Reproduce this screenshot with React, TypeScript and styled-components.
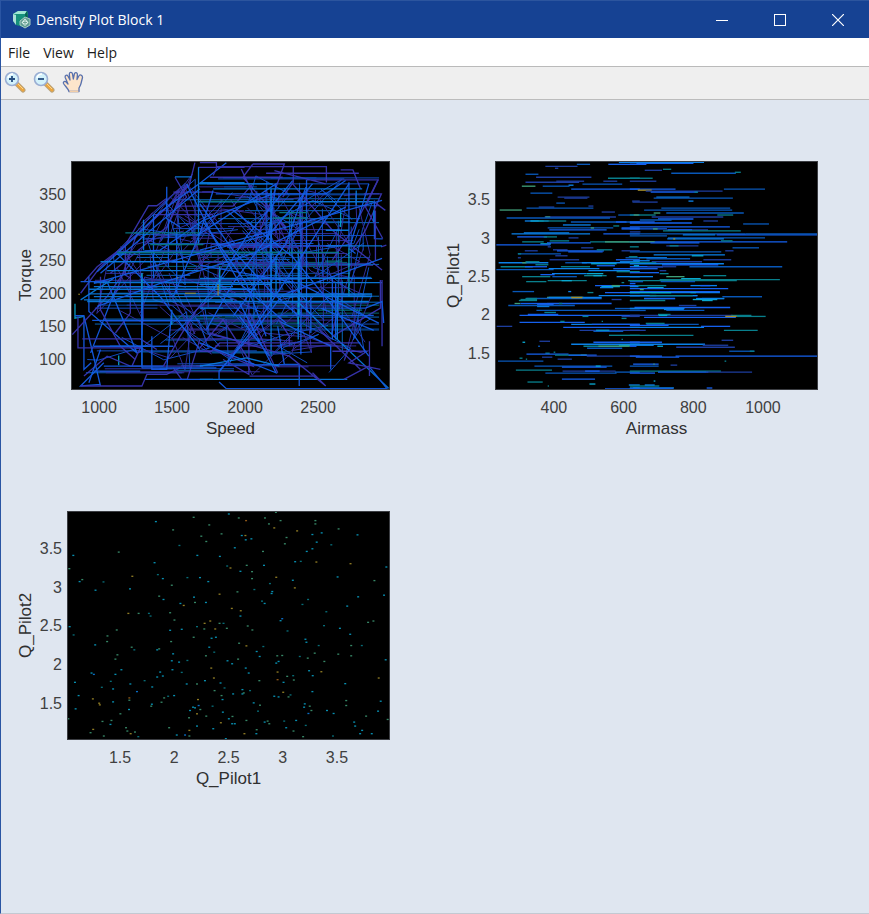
import React from 'react';
import styled, { createGlobalStyle } from 'styled-components';

const GlobalStyle = createGlobalStyle`
  * { box-sizing: border-box; }
  body { margin: 0; background: #dfe6f0; }
`;

const Window = styled.div`
  display: flex;
  flex-direction: column;
  min-height: 100vh;
  border-left: 1px solid #2a55a3;
  border-bottom: 1px solid #c3c9d2;
  background: #dfe6f0;
  font-family: 'Open Sans', 'Noto Sans', sans-serif;
`;

const TitleBar = styled.header`
  display: flex;
  align-items: center;
  height: 38px;
  padding-left: 10px;
  gap: 4px;
  background: #164293;
  border-top: 1px solid #2c559e;
  color: #fff;
`;

const Title = styled.h1`
  flex: 1;
  margin: 0;
  font-size: 14px;
  font-weight: 400;
  line-height: 20px;
`;

const CaptionButton = styled.button`
  display: grid;
  place-items: center;
  width: 58px;
  height: 100%;
  padding: 0;
  border: 0;
  background: none;
  color: #fff;
`;

const CaptionButtons = styled.div`
  display: flex;
  height: 100%;
  padding-right: 2px;
`;

const MenuBar = styled.nav`
  display: flex;
  align-items: center;
  height: 28px;
  gap: 13px;
  padding: 2px 7px 0;
  background: #fff;
`;

const MenuItem = styled.button`
  padding: 0;
  border: 0;
  background: none;
  color: #1c1c1c;
  font: 14px/20px 'Open Sans', 'Noto Sans', sans-serif;
`;

const ToolBar = styled.div`
  display: flex;
  align-items: center;
  height: 34px;
  gap: 5px;
  padding: 0 2px 2px;
  background: #efefef;
  border-top: 1px solid #bababa;
  border-bottom: 1px solid #bcbcbc;
`;

const ToolButton = styled.button`
  display: grid;
  place-items: center;
  width: 24px;
  height: 24px;
  padding: 0;
  border: 0;
  background: none;
`;

const Figure = styled.main`
  flex: 1;
  display: grid;
  grid-template-columns: 1fr 1fr;
  align-content: start;
  row-gap: 10px;
  padding-right: 12px;
  font-family: 'Liberation Sans', Arial, sans-serif;
`;

const Chart = styled.section<{ $gutter: number }>`
  display: grid;
  grid-template-columns: 18px ${p => p.$gutter}px 1fr;
  grid-template-rows: 229px 28px 22px;
  padding: 61px 39px 0 16px;
`;

const YLabel = styled.div`
  writing-mode: vertical-rl;
  transform: rotate(180deg);
  text-align: center;
  font-size: 17px;
  line-height: 18px;
  color: #303030;
`;

const YTicks = styled.div<{ $rows: string }>`
  display: grid;
  grid-template-rows: ${p => p.$rows};
  padding-right: 5px;
  text-align: right;
  font-size: 16px;
  line-height: 20px;
  color: #404040;
`;

const YTick = styled.span<{ $row: number }>`
  grid-row: ${p => p.$row};
  align-self: center;
`;

const XTicks = styled.div<{ $lead: number; $trail: number }>`
  grid-column: 3;
  display: flex;
  margin: 8px ${p => p.$trail}% 0 ${p => p.$lead}%;
  font-size: 16px;
  line-height: 20px;
  color: #404040;
`;

const XTick = styled.span`
  flex: 1 1 0;
  min-width: 0;
  text-align: center;
`;

const XLabel = styled.div`
  grid-column: 3;
  text-align: center;
  font-size: 17px;
  line-height: 22px;
  color: #303030;
`;

const Plot = styled.svg`
  display: block;
  width: 100%;
  height: 100%;
  background: #000;
  border: 1px solid #3b3d42;
`;

type Axis = { label: string; min: number; max: number; ticks: number[] };

/* Share of the axis that lies before the first and after the last tick cell. */
function margins({ min, max, ticks }: Axis) {
  const half = (ticks[1] - ticks[0]) / 2;
  const span = max - min;
  return {
    before: (ticks[0] - half - min) / span,
    cell: (half * 2) / span,
    after: (max - ticks[ticks.length - 1] - half) / span,
  };
}

function DensityChart({ x, y, gutter, children }: {
  x: Axis; y: Axis; gutter: number; children: React.ReactNode;
}) {
  const mx = margins(x);
  const my = margins(y);
  const rows = `${my.after * 100}fr repeat(${y.ticks.length}, ${my.cell * 100}fr) ${my.before * 100}fr`;
  return (
    <Chart $gutter={gutter} aria-label={`${y.label} over ${x.label}`}>
      <YLabel>{y.label}</YLabel>
      <YTicks $rows={rows}>
        {[...y.ticks].reverse().map((t, i) => <YTick key={t} $row={i + 2}>{t}</YTick>)}
      </YTicks>
      {children}
      <XTicks $lead={mx.before * 100} $trail={mx.after * 100}>
        {x.ticks.map(t => <XTick key={t}>{t}</XTick>)}
      </XTicks>
      <XLabel>{x.label}</XLabel>
    </Chart>
  );
}

const COLORS: Record<string, string> = {
  i: '#3c38bb', n: '#1d3d9e', b: '#1560ee', a: '#0a80e8', d: '#0857b8',
  c: '#08a8d0', t: '#087f8c', g: '#409e78', y: '#a8902a', o: '#a5651c',
};

function random(seed: number) {
  let s = seed;
  return () => {
    s = (s * 1664525 + 1013904223) % 4294967296;
    return s / 4294967296;
  };
}

/* ---- Torque over Speed: traces of the driven operating points ---- */

const TRACES: [string, string][] = [
  ['i', 'M250 396L290 350L375 285L445 166H470L498 145M375 285V375L390 384M410 250L350 420L334 450M525 80L560 140L530 168'],
  ['i', 'M585 36L568 105L480 190L410 252L300 350L240 430M595 50H735M520 125H640M530 167H700L760 100M460 193H640M330 370L500 230L560 100'],
  ['b', 'M290 365L400 265L480 185L600 98L680 36M300 370L440 250L600 115M350 310L480 300L610 210L820 130'],
  ['i', 'M600 36H650V48H982V96M760 40L730 80L800 160L860 240M640 75L652 50M630 80H850M725 55L760 130L860 230M882 48V95L850 140'],
  ['i', 'M760 40H855L830 110L760 300M800 68H1080M825 60L980 100M922 88H1138L1060 240L1000 330M1025 58H1062L1085 115'],
  ['a', 'M525 79H575M600 96H735M600 100H820M596 50V280M593 154H1125M430 208V300M352 307H850M300 335H560'],
  ['b', 'M500 109V205L540 230M505 210V350M460 193V385M530 240V430M648 130H980L1040 90M815 120V470M805 270L830 100L600 250'],
  ['b', 'M922 88V485M905 140V420M880 90L740 260L640 420M1050 95V295L1070 310M1052 292L1110 100M1127 150V265L1152 266'],
  ['i', 'M1095 130H1148L1100 240L1060 300M1127 155L1160 180M1138 88L1100 170L1152 265M880 100L1000 240L1150 360M1130 180V330M1147 290L1163 285'],
  ['a', 'M815 115V620M900 325V500M897 300V570M425 370V650M1072 120V165M1125 180V215M830 320V440'],
  ['t', 'M840 187H925M820 203H925M980 333H1030M375 248H600M450 283H610M350 307H1020M600 153H720M955 481H1090'],
  ['c', 'M425 370V480M897 460V523M223 462V505L250 500M355 618V647M660 350V430M515 483V525M1025 175V230M1050 440V295'],
  ['b', 'M265 380V485L410 610M270 610L345 420M240 395H320L410 610L425 605M250 500V660L272 640M223 498H250L300 710M300 705L240 710L310 640'],
  ['i', 'M215 555L320 440L390 340M232 500V595H420L395 650M245 568H420L470 600M250 680L320 620L390 650H610M240 710H425L440 675H500L540 655'],
  ['i', 'M520 655L545 690H562L600 570M300 380V480L360 590L405 630M390 370V490L345 550M490 650L540 560L590 480L665 420'],
  ['b', 'M435 690H640M280 665H420M425 655H650M275 512H600M280 590H520M300 600L265 700M310 650H490M425 440V655M455 560V660H500L515 480'],
  ['a', 'M250 450H700M265 432H1120M280 410H700M265 418H770M280 398H1150M320 362H600M280 440H1120M260 455H1110M900 460L1170 717M600 690H1045'],
  ['b', 'M658 690V665L765 545L850 435L1150 325M658 698L680 718H1165L1110 650M835 530L855 645H900V710M840 515L995 590V660M600 648L860 645'],
  ['i', 'M600 595L670 510L760 650L640 600M748 460V675L670 630M870 590V560L838 510M1112 575V680M1145 390V475L1000 560M1150 390V590M1110 650L1035 690'],
  ['i', 'M1000 605H1105L1050 640L1145 660M960 540L1085 660M600 605H635L660 580H1085M750 490L835 670M630 550L870 620L980 710M940 670L980 710L950 680H750'],
  ['b', 'M600 475H1100L1150 455L1155 520M600 497H1125M965 475L1125 542M720 500L810 620M720 460L830 670L600 580M1000 385V570M1010 400V570M935 440V550M905 480V615'],
  ['a', 'M600 475H670M670 435H1120M600 385H1120M600 403H815M980 287H1150M980 240H1050M640 115H1090M1015 440V570M340 385L240 450M600 650L740 625L840 650'],
  ['b', 'M600 160L700 300L810 420L900 500M610 215L740 400L800 560M920 110L860 280L700 500M1050 100L900 330L760 540L660 665M600 300L900 220L1150 150M280 400L560 320L820 250M600 345L900 400L1140 520'],
  ['b', 'M560 100L640 260L720 400L860 520M700 180L880 320L1010 480L1110 620M290 470L480 400L760 310L1040 170M620 540L700 400L820 240L940 100M350 310L480 440L600 600M520 440L600 250L640 120'],
];

const LEFT_EDGE: [number, number][] = [[40, 590], [100, 545], [165, 470], [247, 385], [350, 300], [430, 250], [720, 250]];

function leftEdge(y: number) {
  for (let i = 1; i < LEFT_EDGE.length; i++) {
    const [y1, x1] = LEFT_EDGE[i];
    const [y0, x0] = LEFT_EDGE[i - 1];
    if (y <= y1) return x0 + ((x1 - x0) * (y - y0)) / (y1 - y0);
  }
  return 250;
}

function operatingTraces() {
  const r = random(71);
  const out: [string, string][] = [];
  const snap = (v: number) => Math.round(v / 3) * 3 + 1;
  for (let i = 0; i < 108; i++) {
    const y = snap(80 + r() * 600);
    const left = leftEdge(y);
    const x0 = left + r() * (1000 - left) * 0.8;
    const x1 = Math.min(1140, x0 + 70 + r() * 480);
    out.push(['iiibbbaadt'[Math.floor(r() * 10)], `M${snap(x0)} ${y}H${snap(x1)}`]);
  }
  for (let i = 0; i < 36; i++) {
    const x = snap(600 + r() * 500);
    const y = snap(90 + r() * 340);
    out.push(['iiibba'[Math.floor(r() * 6)], `M${x} ${y}V${snap(y + 40 + r() * 180)}`]);
  }
  for (let i = 0; i < 125; i++) {
    let y = 120 + r() * 480;
    let x = Math.max(leftEdge(y) + r() * 100, 340 + r() * 760);
    let d = `M${Math.round(x)} ${Math.round(y)}`;
    for (let k = 0; k < 2; k++) {
      y = Math.max(70 + r() * 80, Math.min(560 + r() * 120, y + (r() - 0.5) * 440));
      x = Math.max(leftEdge(y) + 10, Math.min(1070 + r() * 70, x + (r() - 0.5) * 340));
      d += `L${Math.round(x)} ${Math.round(y)}`;
    }
    out.push(['iiiiibbb'[Math.floor(r() * 8)], d]);
  }
  return out;
}

const BACKGROUND_TRACES = operatingTraces();

function SpeedTorquePlot() {
  return (
    <Plot viewBox="214 34 957 685" preserveAspectRatio="none" fill="none" strokeWidth="3">
      <g opacity="0.82">
        {BACKGROUND_TRACES.map(([c, d], i) => <path key={i} d={d} stroke={COLORS[c]} />)}
      </g>
      <g opacity="0.9" strokeWidth="4">
        {TRACES.map(([c, d], i) => <path key={i} d={d} stroke={COLORS[c]} />)}
      </g>
      <path d="M555 430H588M530 384H534M233 433H238M655 403V437" stroke={COLORS.y} />
    </Plot>
  );
}

/* ---- Q_Pilot1 over Airmass: runs "colour start end row", one table per quadrant ---- */

const RUNS = [
  {
    at: 'translate(0 0)',
    data: `n 345 442 45;d 440 480 40;b 535 630 40;a 567 630 35;n 374 384 53;d 285 324 70;n 317 484 78;t 534 630 82;n 285 447 95;n 378 462 91;g 274 315 107;d 337 418 105;a 415 430 102;d 457 577 100;n 520 562 92;
b 423 630 116;d 300 366 127;n 382 478 138;n 402 472 142;n 607 630 152;d 378 404 157;n 325 372 168;d 288 490 172;n 475 490 167;g 207 274 178;n 515 555 183;d 565 630 193;g 612 628 192;n 343 558 198;g 345 360 199;d 228 540 203;
a 283 355 211;c 300 340 212;t 325 408 210;d 422 630 214;b 558 590 214;a 398 482 223;t 550 568 225;d 352 550 233;g 482 492 232;b 575 630 231;b 357 530 237;b 575 630 236;a 280 417 247;a 243 480 251;b 520 630 250;b 260 350 260;t 340 380 260;n 415 445 262;
t 275 340 275;t 358 417 270;t 480 630 274;g 525 600 274;c 330 362 279;b 350 482 278;b 197 360 284;n 352 362 288;n 453 490 292;n 368 412 298;b 380 522 301;b 414 518 304;t 500 547 297;n 575 630 300;n 283 322 301;d 262 392 310;t 262 272 310;n 375 412 316;t 597 623 318;
n 262 271 323;n 358 447 328;b 558 630 329;d 587 630 322;a 204 354 338;g 275 288 337;t 285 327 334;t 315 354 342;d 405 470 338;a 455 630 338;c 483 560 340;a 570 630 333;b 500 555 347;t 210 307 350;t 392 480 348;b 283 350 350;
d 197 370 358;a 355 508 356;b 550 630 355;a 475 600 361;t 560 630 364;a 365 470 369;c 470 520 370;b 330 373 372;t 462 530 376;c 490 516 375;t 275 360 380;d 366 440 379;a 560 630 379;t 287 348 393;t 352 470 391;c 394 425 391;t 575 583 396;t 595 630 391;
b 495 630 407;c 514 570 408;a 510 550 413;g 545 570 407;d 246 311 425;a 414 423 423;b 525 630 427;t 472 490 426;a 506 630 436;g 350 460 442;d 288 515 445;y 423 457 442;t 270 320 449;n 545 575 449`,
  },
  {
    at: 'translate(600 0)',
    data: `b 20 192 38;a 0 224 34;b 0 50 40;n 45 97 58;t 100 125 55;d 125 320 68;t 317 335 65;t 0 69 83;n 0 80 92;b 0 138 116;y 24 66 118;n 48 280 122;b 63 204 125;t 195 206 125;d 284 408 116;a 80 180 140;d 72 311 143;n 8 84 153;a 177 192 152;
d 95 303 173;d 43 309 178;d 110 344 188;g 72 92 188;n 66 282 198;t 264 312 193;y 12 26 192;t 0 78 193;b 85 192 206;d 30 126 208;n 222 266 210;b 0 75 214;b 0 187 218;d 342 420 220;b 0 302 230;b 0 112 235;g 70 84 236;n 110 236 238;b 115 188 238;t 100 335 241;n 0 32 244;
d 0 350 250;a 160 258 254;b 262 566 254;d 350 566 251;d 0 112 257;d 115 408 263;a 113 284 266;y 131 137 265;b 0 475 273;t 275 310 270;g 0 75 273;b 62 210 277;n 110 207 287;t 120 147 286;t 0 27 290;d 310 390 293;d 0 276 303;n 288 313 300;a 72 287 313;c 187 222 315;t 0 22 318;
a 28 112 323;d 50 182 325;a 10 60 330;n 222 306 328;n 66 218 333;t 0 80 338;a 0 284 340;b 97 267 343;b 0 100 349;c 12 28 345;n 53 140 348;d 180 460 350;b 0 84 355;n 90 110 362;b 0 88 368;t 90 117 371;t 222 291 376;a 0 70 380;g 110 165 380;c 155 214 384;
a 99 273 387;t 90 453 388;t 22 323 391;d 0 40 393;d 93 197 395;b 0 17 401;t 20 110 405;a 183 263 405;b 213 243 407;a 0 26 408;c 53 102 413;b 0 297 416;g 30 42 418;a 0 272 427;t 65 125 427;c 183 200 427;c 0 80 436;b 0 204 437;d 280 399 440;a 43 136 446;a 200 285 446;c 218 250 450`,
  },
  {
    at: 'translate(0 420)',
    data: `t 265 320 30;g 252 270 40;b 270 350 40;t 285 320 26;b 320 370 44;a 320 357 48;d 233 434 47;a 355 515 22;y 423 457 22;b 350 545 40;t 386 396 40;d 318 630 61;d 555 630 55;t 342 377 68;b 292 384 73;b 267 630 77;t 457 475 79;n 575 630 79;t 575 590 84;b 267 464 97;t 390 403 94;t 515 519 95;a 423 630 103;b 485 630 104;
n 198 245 110;b 399 630 112;n 448 630 122;c 498 538 120;d 490 580 124;t 537 630 135;t 575 579 148;n 327 359 153;c 276 284 156;d 323 329 168;b 490 630 157;a 423 630 163;c 567 602 167;t 460 575 169;g 505 600 169;d 471 577 175;t 345 358 190;t 370 375 187;
b 288 415 193;t 374 470 195;g 452 470 196;b 415 500 196;n 470 630 198;n 335 366 202;n 382 425 208;t 267 276 205;t 286 290 208;d 202 339 214;d 312 547 230;b 395 530 232;c 497 512 228;t 256 365 240;n 397 557 244;b 465 509 243;d 345 560 250;d 555 630 248;b 395 495 268;t 291 337 277;t 352 356 288;c 478 496 283;b 525 630 299;a 597 630 286;a 610 630 296`,
  },
  {
    at: 'translate(600 420)',
    data: `b 0 272 5;c 0 125 8;a 0 204 16;t 60 190 17;b 43 137 26;c 190 264 29;a 218 285 26;t 0 107 31;d 280 399 19;n 148 201 45;b 14 303 52;a 0 165 55;a 103 163 58;d 110 225 62;d 0 48 60;n 0 310 77;t 85 123 73;t 306 367 75;c 87 113 76;b 43 320 81;y 288 323 79;t 323 410 79;d 50 208 103;t 48 105 100;b 0 117 105;a 0 224 112;b 215 303 110;
n 0 48 122;t 284 386 121;t 0 192 135;n 277 312 151;b 0 97 157;a 0 227 164;n 220 297 166;c 83 100 169;a 0 72 165;b 0 20 169;n 140 317 172;d 300 376 185;t 362 376 185;b 0 97 198;b 138 566 198;b 18 149 203;b 10 87 223;g 71 75 223;d 0 87 230;n 123 143 225;t 286 291 214;t 0 275 245;b 85 237 246;n 230 369 247;b 0 76 250;
c 72 77 273;t 0 89 288;a 45 75 286;a 0 133 295;b 0 130 298;b 232 249 295`,
  },
].map(({ at, data }) => ({
  at,
  runs: data.split(';').map(s => {
    const [c, x0, x1, y] = s.trim().split(' ');
    return { c, x0, x1, y: Math.floor(Number(y) / 3) * 3 + 2 };
  }),
}));

function AirmassPilotPlot() {
  return (
    <Plot viewBox="196 34 969 685" preserveAspectRatio="none" fill="none" strokeWidth="4">
      {RUNS.map(({ at, runs }) => (
        <g key={at} transform={at}>
          {runs.map((s, i) => <path key={i} d={`M${s.x0} ${s.y}H${s.x1}`} stroke={COLORS[s.c]} />)}
        </g>
      ))}
    </Plot>
  );
}

/* ---- Q_Pilot2 over Q_Pilot1: single samples "colour x y" ---- */

const SAMPLES = `c 687 40;g 581 50;g 829 35;g 717 52;o 739 60;g 796 52;g 808 70;g 843 60;g 948 60;g 948 70;c 467 63;g 628 73;g 519 88;y 824 82;y 893 91;g 1018 85;c 939 102;c 967 97;c 1075 103;g 665 100;g 604 107;c 726 105;y 737 105;c 738 118;c 755 115;g 619 123;g 861 111;g 856 130;c 952 125;t 996 133;t 538 135;c 705 142;c 939 145;c 922 153;g 790 153;
g 355 155;c 218 165;c 592 165;c 660 168;c 463 187;c 887 184;t 904 183;y 951 185;y 1054 190;c 793 195;g 741 195;t 682 197;y 692 203;c 722 213;g 757 214;c 1162 200;g 206 205;t 473 223;c 488 235;y 396 228;t 562 232;c 600 232;g 757 235;y 830 231;c 1015 230;c 880 240;g 1126 241;c 237 244;g 245 238;t 309 245;c 625 244;t 811 250;g 515 255;
c 285 270;c 389 266;t 764 268;y 886 263;c 816 280;c 818 274;g 713 275;c 582 291;g 477 288;c 490 298;y 659 282;c 1077 290;c 1155 285;t 926 298;g 585 307;c 618 307;c 541 310;y 551 316;t 787 303;c 795 310;t 909 313;c 1044 318;y 696 325;y 723 332;g 510 338;y 384 340;g 415 340;t 446 340;t 451 348;c 722 348;a 848 356;c 843 362;t 981 335;
g 523 360;y 631 363;y 614 370;g 659 370;t 671 370;t 591 380;g 613 387;y 646 387;g 681 385;g 744 378;g 758 390;c 207 380;g 349 390;c 510 391;c 545 388;t 864 393;t 974 377;c 1022 385;g 1107 367;g 1123 363;c 1053 403;t 219 405;c 635 415;c 648 412;g 321 408;g 320 425;g 513 425;g 581 412;c 918 418;c 921 427;g 718 430;y 740 438;c 284 435;
c 628 442;g 394 442;t 402 450;c 471 450;g 477 447;t 791 440;t 958 437;g 1056 437;t 1088 437;c 519 462;c 771 455;c 780 470;t 643 457;g 618 468;g 351 465;g 345 478;g 833 468;g 848 467;t 901 470;g 925 475;g 946 460;g 1017 463;g 1056 468;c 515 483;c 537 487;t 562 482;c 683 483;c 697 492;g 715 478;c 830 490;c 837 485;g 975 485;c 1160 480;
c 363 510;a 280 524;c 273 520;c 345 524;c 517 510;c 480 517;c 488 529;c 471 532;t 545 518;y 634 505;c 738 505;c 747 520;y 834 517;o 834 540;g 863 530;t 881 528;g 883 541;c 929 513;c 940 528;y 966 516;c 223 548;t 331 545;t 433 543;c 390 553;c 560 553;g 591 553;c 615 543;y 642 535;c 662 550;g 779 543;c 852 548;c 1038 552;y 1139 535;
c 338 568;t 304 563;a 410 576;c 456 562;t 674 565;c 728 570;g 644 573;c 728 583;g 732 580;c 700 583;t 751 573;y 851 578;c 939 576;c 234 588;y 277 598;g 387 602;o 387 595;c 338 607;y 296 611;y 298 616;c 455 614;g 453 620;g 484 608;g 492 595;t 504 590;c 522 588;g 665 588;c 668 600;c 824 590;c 837 592;g 867 592;t 873 586;c 762 610;
g 781 617;y 594 600;a 596 618;c 579 623;c 585 625;c 225 628;c 386 630;c 570 633;g 601 630;y 591 643;t 638 620;c 669 638;t 775 635;c 916 613;c 914 623;g 931 620;g 936 633;a 927 642;c 983 633;c 1003 642;g 1041 603;g 1041 618;c 1145 605;c 1137 635;g 360 643;g 567 655;g 619 650;c 687 658;g 698 651;g 1101 650;g 1166 660;g 203 658;
g 306 666;g 333 663;c 330 675;c 591 680;y 663 670;c 697 673;c 705 673;g 740 663;c 795 668;g 804 665;g 809 673;t 854 665;c 890 663;c 860 685;t 919 678;c 1065 668;c 1068 680;g 377 685;g 381 695;y 391 703;g 404 698;g 507 685;y 568 693;c 640 688;g 771 691;c 770 703;y 734 703;g 882 695;c 1089 693;c 1083 703;c 1118 703;y 278 690;g 270 700;
g 310 710;t 414 712;c 530 707;a 555 707;g 568 710;c 678 718;g 911 712;t 1001 710`
  .split(';').map(s => {
    const [c, x, y] = s.trim().split(' ');
    return { c, x: Number(x) - 3, y: Number(y) - 2 };
  });

function PilotPilotPlot() {
  return (
    <Plot viewBox="202 34 968 685" preserveAspectRatio="none">
      {SAMPLES.map((p, i) => <rect key={i} x={p.x} y={p.y} width="6" height="4" fill={COLORS[p.c]} opacity="0.85" />)}
    </Plot>
  );
}

/* ---- Icons ---- */

function AppIcon() {
  return (
    <svg width="21" height="20" viewBox="0 0 21 20" aria-hidden="true">
      <path d="M2 4L7 1H16L17 3V10L12 17L5 15L2 11Z" fill="#15917b" />
      <path d="M2 4L7 1H16L14 4Z" fill="#9ee7d3" />
      <path d="M2 4L5 5V15L2 11Z" fill="#aadfd6" />
      <path d="M14 4L16 1L17 8L14 12Z" fill="#086551" />
      <path d="M9 11L14 7L19 9V15L14 18L9 15Z" fill="#5e9b90" stroke="#a9cbc4" strokeWidth="1" />
      <path d="M14 8.500L17.500 12.500L14 16L10.500 12.500Z" fill="#dcefe9" />
      <path d="M14 10V15M12 12.500H16" stroke="#6ea397" />
    </svg>
  );
}

function MagnifierIcon({ plus }: { plus?: boolean }) {
  return (
    <svg width="22" height="22" viewBox="0 0 22 22" aria-hidden="true">
      <path d="M12 12L19 19" stroke="#b9a37c" strokeWidth="5" strokeLinecap="round" />
      <path d="M13 13L19 19" stroke="#eda63d" strokeWidth="3" strokeLinecap="round" />
      <path d="M14 13L19 18" stroke="#ffd68b" strokeWidth="1" />
      <circle cx="8" cy="8" r="6.500" fill="#d3f2fb" stroke="#9aaed3" strokeWidth="1.600" />
      <path d="M4 7Q5 3 9 3" fill="none" stroke="#fff" strokeWidth="1.400" />
      <path d={plus ? 'M5 8H11M8 5V11' : 'M5 8H11'} stroke="#254d80" strokeWidth="1.800" />
    </svg>
  );
}

function HandIcon() {
  return (
    <svg width="22" height="22" viewBox="0 0 22 22" aria-hidden="true">
      <path
        d="M7 20.500C6.500 18 3 15 1.500 12.500C.8 10.800 2.800 9.600 4.200 11L6 13L3.200 6.500C2.600 4.300 5 3.400 6 5.200L8 9L7.300 3.300C7.200 1 10 .8 10.500 2.800L11.300 8L12.400 2.800C13 .9 15.600 1.500 15.400 3.600L15 8.500L16.800 5C17.700 3 20.800 4 20.500 6.500L19 12.500C18.500 14.500 17.500 16 17 17V20.500Z"
        fill="#fde5cb" stroke="#5871ad" strokeWidth="1.300" strokeLinejoin="round"
      />
      <path d="M7.500 20.500H16.500" stroke="#f3cfa9" strokeWidth="1.500" />
    </svg>
  );
}

const speed: Axis = { label: 'Speed', min: 808, max: 2993, ticks: [1000, 1500, 2000, 2500] };
const torque: Axis = { label: 'Torque', min: 54, max: 402, ticks: [100, 150, 200, 250, 300, 350] };
const airmass: Axis = { label: 'Airmass', min: 231, max: 1158, ticks: [400, 600, 800, 1000] };
const pilot1: Axis = { label: 'Q_Pilot1', min: 1.03, max: 4.01, ticks: [1.5, 2, 2.5, 3, 3.5] };
const pilot1Wide: Axis = { ...pilot1, min: 1.01, max: 3.99 };
const pilot2: Axis = { label: 'Q_Pilot2', min: 1.03, max: 3.99, ticks: [1.5, 2, 2.5, 3, 3.5] };

export default function App() {
  return (
    <>
      <GlobalStyle />
      <Window>
        <TitleBar>
          <AppIcon />
          <Title>Density Plot Block 1</Title>
          <CaptionButtons>
            <CaptionButton aria-label="Minimize">
              <svg width="12" height="12" shapeRendering="crispEdges"><path d="M0 6.500H12" stroke="currentColor" /></svg>
            </CaptionButton>
            <CaptionButton aria-label="Maximize">
              <svg width="12" height="12"><rect x="0.500" y="0.500" width="11" height="11" fill="none" stroke="currentColor" /></svg>
            </CaptionButton>
            <CaptionButton aria-label="Close">
              <svg width="12" height="12"><path d="M0 0L12 12M12 0L0 12" stroke="currentColor" strokeWidth="1.200" /></svg>
            </CaptionButton>
          </CaptionButtons>
        </TitleBar>
        <MenuBar aria-label="Menu">
          <MenuItem>File</MenuItem>
          <MenuItem>View</MenuItem>
          <MenuItem>Help</MenuItem>
        </MenuBar>
        <ToolBar role="toolbar">
          <ToolButton aria-label="Zoom in"><MagnifierIcon plus /></ToolButton>
          <ToolButton aria-label="Zoom out"><MagnifierIcon /></ToolButton>
          <ToolButton aria-label="Pan"><HandIcon /></ToolButton>
        </ToolBar>
        <Figure>
          <DensityChart x={speed} y={torque} gutter={36}><SpeedTorquePlot /></DensityChart>
          <DensityChart x={airmass} y={pilot1} gutter={32}><AirmassPilotPlot /></DensityChart>
          <DensityChart x={pilot1Wide} y={pilot2} gutter={32}><PilotPilotPlot /></DensityChart>
        </Figure>
      </Window>
    </>
  );
}
